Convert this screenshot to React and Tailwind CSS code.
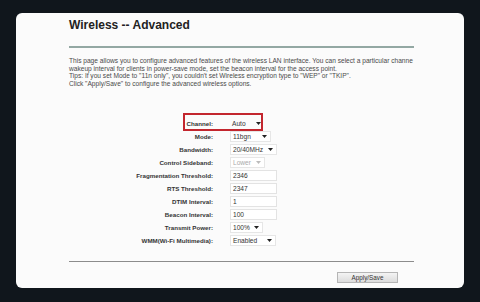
import React from "react";

const rows = [
  { label: "Channel:", type: "select", value: "Auto", width: "w-[34px]", plain: true },
  { label: "Mode:", type: "select", value: "11bgn", width: "w-[41px]" },
  { label: "Bandwidth:", type: "select", value: "20/40MHz", width: "w-[47px]" },
  { label: "Control Sideband:", type: "select", value: "Lower", width: "w-[35px]", disabled: true },
  { label: "Fragmentation Threshold:", type: "input", value: "2346" },
  { label: "RTS Threshold:", type: "input", value: "2347" },
  { label: "DTIM Interval:", type: "input", value: "1" },
  { label: "Beacon Interval:", type: "input", value: "100" },
  { label: "Transmit Power:", type: "select", value: "100%", width: "w-[33px]" },
  { label: "WMM(Wi-Fi Multimedia):", type: "select", value: "Enabled", width: "w-[46px]" },
];

const Arrow = ({ faded }) => (
  <svg width="5" height="3" viewBox="0 0 5 3" className="shrink-0">
    <path d="M0 0h5L2.5 3z" fill={faded ? "#bbbbbb" : "#222222"} />
  </svg>
);

const Field = ({ row }) => {
  if (row.type === "input") {
    return (
      <div className="flex h-[11px] w-[47px] items-center border border-[#e3e3e3] bg-white pl-[2px] text-[6.6px] text-[#333]">
        {row.value}
      </div>
    );
  }
  return (
    <div
      className={`flex h-[11px] ${row.width} items-center justify-between pl-[2px] pr-[3px] text-[6.6px] ${
        row.plain ? "" : "border border-[#e6e6e6] bg-white"
      } ${row.disabled ? "text-[#aaa]" : "text-[#333]"}`}
    >
      <span>{row.value}</span>
      <Arrow faded={row.disabled} />
    </div>
  );
};

export default function App() {
  return (
    <div className="h-[302px] w-[480px] overflow-hidden bg-[#10161c] pt-[13px] font-['Liberation_Sans',Arial,sans-serif]">
      <div className="mx-[16px] h-[275px] rounded-[6px] bg-[#fbfbfb] pl-[53px] pr-[50px]">
        <h1 className="pt-[5px] text-[12px] font-bold leading-[14px] text-[#222]">Wireless -- Advanced</h1>
        <div className="mt-[14px] h-[2px] bg-[#93a8a3]" />

        <div className="mt-[9px] text-[6.6px] leading-[7.6px] text-[#4a4a4a]">
          <p className="whitespace-nowrap">
            This page allows you to configure advanced features of the wireless LAN interface. You can select a particular channe
          </p>
          <p className="whitespace-nowrap">wakeup interval for clients in power-save mode, set the beacon interval for the access point.</p>
          <p className="whitespace-nowrap">Tips: If you set Mode to "11n only", you couldn't set Wireless encryption type to "WEP" or "TKIP".</p>
          <p className="whitespace-nowrap">Click "Apply/Save" to configure the advanced wireless options.</p>
        </div>

        <div className="mt-[30px] grid grid-cols-[144px_1fr] gap-x-[17px]">
          {rows.map((row, i) => (
            <React.Fragment key={row.label}>
              <div className="relative flex h-[13px] items-center justify-end whitespace-nowrap text-[6.2px] font-bold text-[#333]">
                {i === 0 && (
                  <span className="absolute left-[114px] top-[-4px] h-[18px] w-[80px] border-2 border-[#c3262e]" />
                )}
                {row.label}
              </div>
              <div className="flex h-[13px] items-center">
                <Field row={row} />
              </div>
            </React.Fragment>
          ))}
        </div>

        <div className="mt-[14px] h-px bg-[#8c8c8c]" />
        <div className="mt-[10px] flex justify-end pr-[16px]">
          <button className="h-[11px] w-[61px] border border-[#b5b5b5] bg-gradient-to-b from-[#f4f4f4] to-[#dcdcdc] text-[6.3px] leading-none text-[#333]">
            Apply/Save
          </button>
        </div>
      </div>
    </div>
  );
}
